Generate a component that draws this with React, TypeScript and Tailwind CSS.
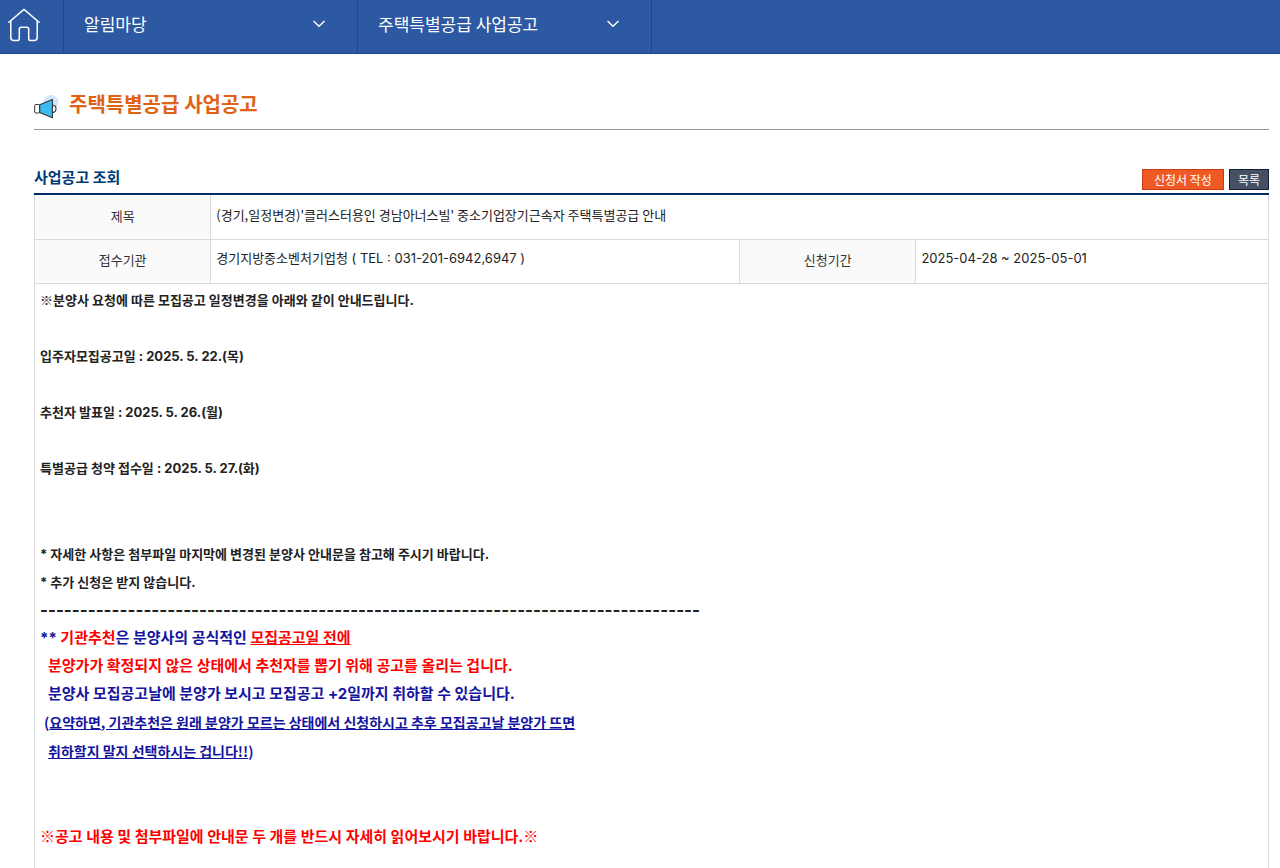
import { useState } from 'react';
import type { ReactNode } from 'react';

type NavSelectProps = {
    label: string;
    options: string[];
};

function NavSelect({ label, options }: NavSelectProps) {
    const [value, setValue] = useState(options[0]);

    return (
        <div className="relative w-[294px] border-r border-[#1e4788]">
            <select
                aria-label={label}
                value={value}
                onChange={(e) => setValue(e.target.value)}
                className="h-full w-full appearance-none bg-transparent pl-5 pr-14 pb-1.5 font-['Noto_Sans_CJK_KR',sans-serif] text-[17px] text-white focus:outline-none"
            >
                {options.map((option) => (
                    <option key={option} className="text-black">{option}</option>
                ))}
            </select>
            <svg className="pointer-events-none absolute right-8 top-5 h-2 w-3" viewBox="0 0 12 8" fill="none" stroke="white" strokeWidth="1.4">
                <path d="M0.5 1 L6 6.3 L11.5 1" />
            </svg>
        </div>
    );
}

function HomeIcon() {
    return (
        <svg className="h-9 w-8" viewBox="0 0 32 36" fill="none" stroke="white" strokeWidth="1.5" strokeLinecap="round" strokeLinejoin="round">
            <path d="M0.9 14.2 L16 1.4 L31.1 14.2" />
            <path d="M2.8 13 V29.5 Q2.8 32.5 5.8 32.5 H9.2 Q11.3 32.5 11.3 30.4 V21.3 Q11.3 19.2 13.4 19.2 H18.6 Q20.7 19.2 20.7 21.3 V30.4 Q20.7 32.5 22.8 32.5 H26.2 Q29.2 32.5 29.2 29.5 V13" />
        </svg>
    );
}

function MegaphoneIcon() {
    return (
        <svg className="h-6 w-[25px]" viewBox="0 0 25 24">
            <circle cx="17" cy="7.5" r="7.5" fill="#d3e5fb" />
            <rect x="0.7" y="9.5" width="5" height="8.5" rx="1" fill="white" stroke="#333" strokeWidth="1" />
            <path d="M18.5 10 Q22 10.5 22 13.7 Q22 17 18.5 17.6 Z" fill="white" stroke="#333" strokeWidth="1.1" />
            <path d="M5.7 9.8 L18.4 4.5 V22.8 L5.7 17.6 Z" fill="#3cbcf5" stroke="#333" strokeWidth="1.1" strokeLinejoin="round" />
        </svg>
    );
}

function LabelCell({ children }: { children: ReactNode }) {
    return (
        <th scope="row" className="border border-[#dadada] bg-[#fafafa] p-0 text-center font-normal text-[#333]">
            {children}
        </th>
    );
}

// reference mark, full width in the Korean font
function Mark() {
    return <span className="font-['Noto_Sans_CJK_KR',sans-serif]">※</span>;
}

export default function App() {
    return (
        <div className="min-h-screen bg-white font-['Inter','Noto_Sans_CJK_KR',sans-serif] text-[13px] text-[#222]">
            {/* Top navigation */}
            <nav className="flex h-[54px] border-b border-[#1c4a92] bg-[#2c59a1]">
                <a href="#" aria-label="홈" className="flex w-16 items-center border-r border-[#1e4788] pb-0.5 pl-2">
                    <HomeIcon />
                </a>
                <NavSelect label="메뉴" options={['알림마당']} />
                <NavSelect label="하위 메뉴" options={['주택특별공급 사업공고']} />
            </nav>

            <main className="pl-[34px] pr-[11px]">
                <div className="flex h-19 items-end gap-2.5 border-b border-[#999] pb-2.5">
                    <MegaphoneIcon />
                    <h1 className="text-xl leading-7 font-bold text-[#de6316]">주택특별공급 사업공고</h1>
                </div>

                <div className="mt-9 flex items-end justify-between pb-[3px]">
                    <h2 className="text-[15px] leading-6 font-bold text-[#003a78]">사업공고 조회</h2>
                    <div className="flex gap-[5px] font-['Noto_Sans_CJK_KR',sans-serif] text-xs">
                        <button className="h-[21px] border border-[#c83c10] bg-[#ef5a24] px-[11px] leading-4 text-white">신청서 작성</button>
                        <button className="h-[21px] border border-[#151c35] bg-[#465064] px-2 leading-4 text-white">목록</button>
                    </div>
                </div>

                <table className="w-full table-fixed border-collapse border-t-2 border-[#002d68]">
                    <colgroup>
                        <col className="w-1/7" />
                        <col className="w-3/7" />
                        <col className="w-1/7" />
                        <col className="w-2/7" />
                    </colgroup>
                    <tbody>
                        <tr className="h-[45px]">
                            <LabelCell>제목</LabelCell>
                            <td colSpan={3} className="border border-[#dadada] px-[5px] pb-1 font-['Noto_Sans_CJK_KR',sans-serif]">
                                (경기,일정변경)'클러스터용인 경남아너스빌' 중소기업장기근속자 주택특별공급 안내
                            </td>
                        </tr>
                        <tr className="h-11">
                            <LabelCell>접수기관</LabelCell>
                            <td className="border border-[#dadada] px-[5px] pb-1">경기지방중소벤처기업청 ( TEL : 031-201-6942,6947 )</td>
                            <LabelCell>신청기간</LabelCell>
                            <td className="border border-[#dadada] px-[5px] pb-1">2025-04-28 ~ 2025-05-01</td>
                        </tr>
                        <tr>
                            <td colSpan={4} className="border border-[#dadada] px-[5px] pt-0.5 pb-8 leading-7 font-bold">
                                <div className="flex flex-col gap-7">
                                    <p><Mark />분양사 요청에 따른 모집공고 일정변경을 아래와 같이 안내드립니다.</p>
                                    <p>입주자모집공고일 : 2025. 5. 22.(목)</p>
                                    <p>추천자 발표일 : 2025. 5. 26.(월)</p>
                                    <p>특별공급 청약 접수일 : 2025. 5. 27.(화)</p>
                                </div>

                                <div className="mt-[58px]">
                                    <p>* 자세한 사항은 첨부파일 마지막에 변경된 분양사 안내문을 참고해 주시기 바랍니다.</p>
                                    <p>* 추가 신청은 받지 않습니다.</p>
                                    <p className="text-[17px]">-----------------------------------------------------------------------------------</p>
                                </div>

                                <div className="text-[15px] text-[#1414a0]">
                                    <p>
                                        ** <span className="text-[#f00]">기관추천</span>은 분양사의 공식적인{' '}
                                        <span className="text-[#f00] underline">모집공고일 전에</span>
                                    </p>
                                    <p className="pl-2 text-[#f00]">분양가가 확정되지 않은 상태에서 추천자를 뽑기 위해 공고를 올리는 겁니다.</p>
                                    <p className="pl-2">분양사 모집공고날에 분양가 보시고 모집공고 +2일까지 취하할 수 있습니다.</p>
                                </div>
                                <div className="font-['Noto_Sans_CJK_KR',sans-serif] text-sm leading-[29px] text-[#1414a0]">
                                    <p className="pl-1">
                                        (<span className="underline">요약하면, 기관추천은 원래 분양가 모르는 상태에서 신청하시고 추후 모집공고날 분양가 뜨면</span>
                                    </p>
                                    <p className="pl-2">
                                        <span className="underline">취하할지 말지 선택하시는 겁니다!!</span>)
                                    </p>
                                </div>

                                <p className="mt-14 text-[15px] text-[#f00]"><Mark />공고 내용 및 첨부파일에 안내문 두 개를 반드시 자세히 읽어보시기 바랍니다.<Mark /></p>
                            </td>
                        </tr>
                    </tbody>
                </table>
            </main>
        </div>
    );
}
